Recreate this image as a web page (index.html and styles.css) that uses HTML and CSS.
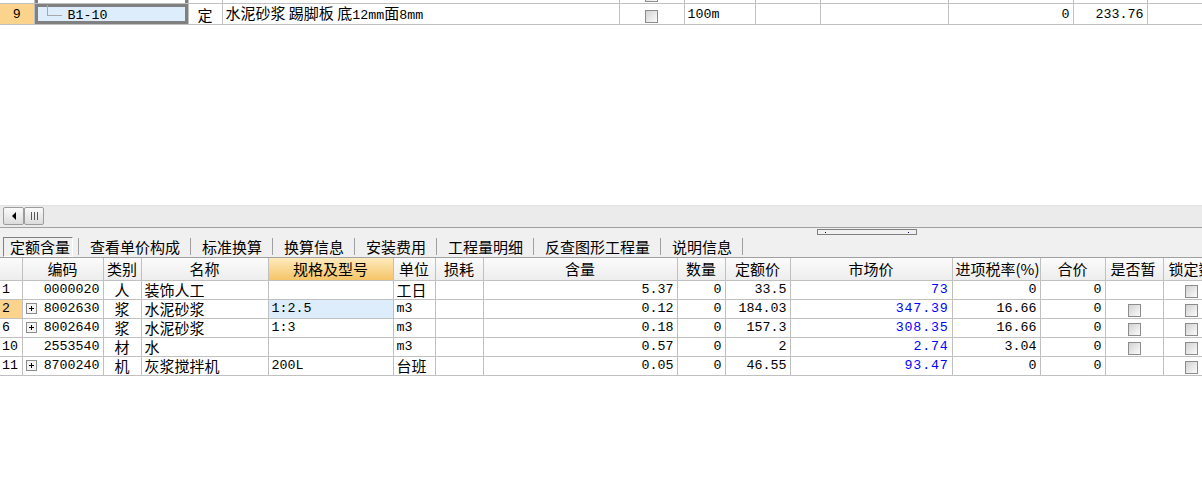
FILE: index.html
```html
<!DOCTYPE html>
<html lang="zh-CN">
<head>
    <meta charset="UTF-8" />
    <title>定额含量</title>
    <link rel="stylesheet" href="styles.css">
</head>
<body>

<!-- 上方清单/定额表格 -->
<div class="upper">
    <table class="grid top-grid">
        <colgroup>
            <col class="t1"><col class="t2"><col class="t3"><col class="t4"><col class="t5"><col class="t6">
            <col class="t7"><col class="t8"><col class="t9"><col class="t10"><col class="t11">
        </colgroup>
        <tr>
            <td></td><td class="sel-edge"></td><td></td><td></td>
            <td class="center"><span class="cb"></span></td>
            <td></td><td></td><td></td><td></td><td></td><td></td>
        </tr>
        <tr>
            <td class="rowno hot center n">9</td>
            <td class="current">
                <div class="tree"><span class="branch"></span><span class="n">B1-10</span></div>
            </td>
            <td class="center">定</td>
            <td>水泥砂浆 踢脚板 底<span class="n">12mm</span>面<span class="n">8mm</span></td>
            <td class="center"><span class="cb"></span></td>
            <td class="n">100m</td>
            <td></td>
            <td></td>
            <td class="n right">0</td>
            <td class="n right">233.76</td>
            <td></td>
        </tr>
    </table>
</div>

<!-- 横向滚动条 -->
<div class="hscroll">
    <span class="sb-btn"><span class="arrow"></span></span>
    <span class="sb-thumb"><i></i><i></i><i></i></span>
</div>

<!-- 分隔条 + 页签 -->
<div class="tabbar">
    <div class="splitter"><span class="grip"><i></i><i></i></span></div>
    <div class="tabs">
        <span class="tab active">定额含量</span><span class="sep"></span>
        <span class="tab">查看单价构成</span><span class="sep"></span>
        <span class="tab">标准换算</span><span class="sep"></span>
        <span class="tab">换算信息</span><span class="sep"></span>
        <span class="tab">安装费用</span><span class="sep"></span>
        <span class="tab">工程量明细</span><span class="sep"></span>
        <span class="tab">反查图形工程量</span><span class="sep"></span>
        <span class="tab">说明信息</span><span class="sep"></span>
    </div>
</div>

<!-- 人材机含量表 -->
<table class="grid bottom-grid">
    <colgroup>
        <col class="b1"><col class="b2"><col class="b3"><col class="b4"><col class="b5"><col class="b6"><col class="b7">
        <col class="b8"><col class="b9"><col class="b10"><col class="b11"><col class="b12"><col class="b13"><col class="b14"><col class="b15">
    </colgroup>
    <thead>
        <tr>
            <th></th><th>编码</th><th>类别</th><th>名称</th><th class="sorted">规格及型号</th><th>单位</th><th>损耗</th>
            <th>含量</th><th>数量</th><th>定额价</th><th>市场价</th><th>进项税率(%)</th><th>合价</th><th class="clip">是否暂</th><th class="clip">锁定数</th>
        </tr>
    </thead>
    <tbody>
        <tr>
            <td class="rowno n">1</td>
            <td><div class="code n">0000020</div></td>
            <td class="center">人</td><td>装饰人工</td><td></td><td>工日</td><td></td>
            <td class="n right">5.37</td><td class="n right">0</td><td class="n right">33.5</td>
            <td class="n right price">73</td><td class="n right">0</td><td class="n right">0</td>
            <td></td><td class="center"><span class="cb"></span></td>
        </tr>
        <tr>
            <td class="rowno hot n">2</td>
            <td><div class="code n"><span class="plus"></span>8002630</div></td>
            <td class="center">浆</td><td>水泥砂浆</td><td class="n focus">1:2.5</td><td class="n">m3</td><td></td>
            <td class="n right">0.12</td><td class="n right">0</td><td class="n right">184.03</td>
            <td class="n right price">347.39</td><td class="n right">16.66</td><td class="n right">0</td>
            <td class="center"><span class="cb"></span></td><td class="center"><span class="cb"></span></td>
        </tr>
        <tr>
            <td class="rowno n">6</td>
            <td><div class="code n"><span class="plus"></span>8002640</div></td>
            <td class="center">浆</td><td>水泥砂浆</td><td class="n">1:3</td><td class="n">m3</td><td></td>
            <td class="n right">0.18</td><td class="n right">0</td><td class="n right">157.3</td>
            <td class="n right price">308.35</td><td class="n right">16.66</td><td class="n right">0</td>
            <td class="center"><span class="cb"></span></td><td class="center"><span class="cb"></span></td>
        </tr>
        <tr>
            <td class="rowno n">10</td>
            <td><div class="code n">2553540</div></td>
            <td class="center">材</td><td>水</td><td></td><td class="n">m3</td><td></td>
            <td class="n right">0.57</td><td class="n right">0</td><td class="n right">2</td>
            <td class="n right price">2.74</td><td class="n right">3.04</td><td class="n right">0</td>
            <td class="center"><span class="cb"></span></td><td class="center"><span class="cb"></span></td>
        </tr>
        <tr>
            <td class="rowno n">11</td>
            <td><div class="code n"><span class="plus"></span>8700240</div></td>
            <td class="center">机</td><td>灰浆搅拌机</td><td class="n">200L</td><td>台班</td><td></td>
            <td class="n right">0.05</td><td class="n right">0</td><td class="n right">46.55</td>
            <td class="n right price">93.47</td><td class="n right">0</td><td class="n right">0</td>
            <td></td><td class="center"><span class="cb"></span></td>
        </tr>
    </tbody>
</table>

</body>
</html>
```

FILE: styles.css
```css
:root {
    --line: #c0c0c0;
    --dark-line: #a0a0a0;
    --panel: #f0f0f0;
    --hot: #fcd38d;
    --select: #deedfc;
    --blue: #0000ff;
}

* {
    box-sizing: border-box;
    margin: 0;
    padding: 0;
}

html, body {
    width: 1202px;
    height: 483px;
    overflow: hidden;
    background: #fff;
    font-family: "Noto Sans CJK SC", "Liberation Sans", sans-serif;
    font-size: 15px;
    color: #000;
}

/* =========================
   GRID COMMON
========================= */
.grid {
    border-collapse: collapse;
    table-layout: fixed;
}

.grid td,
.grid th {
    border: 1px solid var(--line);
    padding: 0 3px;
    line-height: 17px;
    white-space: nowrap;
    overflow: hidden;
    font-weight: normal;
    vertical-align: middle;
}

.n {
    font-family: "Liberation Mono", "Noto Sans CJK SC", monospace;
    font-size: 13.3px;
}

.right { text-align: right; }
.center { text-align: center; }

.rowno { text-align: left; }
.hot { background: var(--hot); }

.cb {
    display: inline-block;
    width: 13px;
    height: 13px;
    border: 1px solid #8c8c8c;
    background: linear-gradient(135deg, #d2d2d2, #fbfbfb);
    vertical-align: middle;
}

/* =========================
   UPPER GRID
========================= */
.upper {
    height: 205px;
    overflow: hidden;
}

.top-grid {
    width: 1210px;
    margin-top: -17px;
}

.top-grid td {
    height: 20px;
    border-left: 1px solid var(--line);
    border-right: 1px solid var(--line);
}

.top-grid tr td:first-child { border-left: none; }

.top-grid .rowno { text-align: center; }

.t1 { width: 34px; }
.t2 { width: 154px; }
.t3 { width: 34px; }
.t4 { width: 397px; }
.t5 { width: 65px; }
.t6 { width: 71px; }
.t7 { width: 65px; }
.t8 { width: 128px; }
.t9 { width: 125px; }
.t10 { width: 74px; }
.t11 { width: 63px; }

.sel-edge {
    box-shadow: inset 3px 0 0 #808080, inset -3px 0 0 #808080;
}

.current {
    background: var(--select);
    box-shadow: inset 0 0 0 3px #808080;
    padding: 0;
}

.tree {
    display: flex;
    align-items: flex-start;
    height: 19px;
}

.branch {
    width: 15px;
    height: 11px;
    margin-left: 9px;
    margin-right: 6px;
    border-left: 1px solid #a8a8a8;
    border-bottom: 1px solid #a8a8a8;
}

.tree .n {
    align-self: center;
    margin-top: 2px;
}

/* =========================
   SCROLLBAR
========================= */
.hscroll {
    height: 23px;
    background: #ebebeb;
    border-top: 1px solid #e2e2e2;
    border-bottom: 1px solid var(--dark-line);
    display: flex;
    align-items: flex-start;
    padding: 1px 0 0 3px;
}

.sb-btn,
.sb-thumb {
    height: 18px;
    border: 1px solid #9c9c9c;
    border-radius: 2px;
    background: linear-gradient(#fafafa, #dcdcdc);
    display: flex;
    align-items: center;
    justify-content: center;
}

.sb-btn { width: 21px; }

.arrow {
    width: 0;
    height: 0;
    border-top: 4px solid transparent;
    border-bottom: 4px solid transparent;
    border-right: 4px solid #000;
}

.sb-thumb {
    width: 20px;
    gap: 2px;
}

.sb-thumb i {
    width: 1px;
    height: 8px;
    background: #555;
}

/* =========================
   TAB BAR
========================= */
.tabbar {
    height: 30px;
    background: var(--panel);
    border-bottom: 1px solid var(--dark-line);
}

.splitter {
    height: 8px;
    padding: 1px 0 0 817px;
}

.grip {
    display: flex;
    justify-content: space-between;
    align-items: center;
    width: 100px;
    height: 6px;
    padding: 0 7px;
    border: 1px solid #808080;
}

.grip i {
    width: 1px;
    height: 1px;
    background: #000080;
}

.tabs {
    display: flex;
    align-items: center;
    height: 21px;
}

.tab {
    padding: 0 10px 0 11px;
    line-height: 18px;
    white-space: nowrap;
}

.tab.active {
    margin: 0 5px 0 3px;
    padding: 0 2px 0 6px;
    line-height: 18px;
    border-top: 1px solid #808080;
    border-left: 1px solid #808080;
    border-bottom: 1px solid #fff;
    border-right: 1px solid #fff;
}

.sep {
    width: 1px;
    height: 17px;
    background: var(--dark-line);
}

/* =========================
   LOWER GRID
========================= */
.bottom-grid {
    width: 1220px;
}

.bottom-grid th {
    height: 22px;
    border-top: none;
    background: linear-gradient(#fbfbfb, #ededed);
    text-align: center;
}

.bottom-grid th.sorted {
    background: linear-gradient(#fdebbd, #f6c467);
}

.bottom-grid th.clip {
    text-align: left;
    padding-left: 5px;
}

.bottom-grid td {
    height: 19px;
}

.bottom-grid tr > :first-child { border-left: none; }

.b1 { width: 22px; }
.b2 { width: 81px; }
.b3 { width: 38px; }
.b4 { width: 127px; }
.b5 { width: 125px; }
.b6 { width: 42px; }
.b7 { width: 48px; }
.b8 { width: 194px; }
.b9 { width: 48px; }
.b10 { width: 65px; }
.b11 { width: 162px; }
.b12 { width: 88px; }
.b13 { width: 65px; }
.b14 { width: 58px; }
.b15 { width: 57px; }

.bottom-grid .rowno { padding-left: 2px; }

.code {
    display: flex;
    align-items: center;
    justify-content: flex-end;
}

.plus {
    width: 11px;
    height: 11px;
    margin-right: auto;
    border: 1px solid #8c8c8c;
    background:
        linear-gradient(#000, #000) center / 5px 1px no-repeat,
        linear-gradient(#000, #000) center / 1px 5px no-repeat,
        #f4f4f4;
}

.focus { background: var(--select); }

.price {
    color: var(--blue);
    font-weight: bold;
    letter-spacing: 0.8px;
}
```
